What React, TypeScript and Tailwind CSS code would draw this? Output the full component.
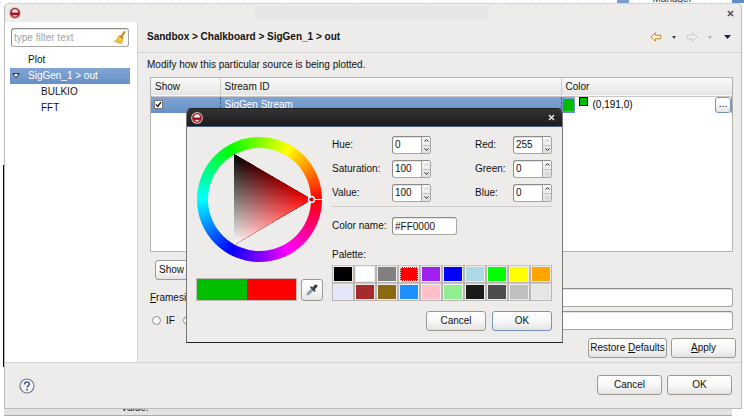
import React from "react";

const control =
  "rounded-[3px] border border-[#8e8b87] border-r-[#a9a6a2] border-b-[#a9a6a2] bg-white shadow-[inset_0_1px_0_#e4e4e4] outline-none";

const buttonBase =
  "flex items-center justify-center rounded-[3px] border bg-linear-to-b from-white via-[#f8f8f8] to-[#e4e3e2] leading-none";

function Button({
  children,
  className = "",
  primary = false,
}: {
  children: React.ReactNode;
  className?: string;
  primary?: boolean;
}) {
  return (
    <button
      type="button"
      className={`${buttonBase} h-5 ${primary ? "border-[#7a93bb]" : "border-[#9c9995]"} ${className}`}
    >
      {children}
    </button>
  );
}

function AppIcon() {
  return (
    <svg viewBox="0 0 12 12" className="size-3 shrink-0" aria-hidden="true">
      <circle cx="6" cy="6" r="5.9" fill="#c4c2c1" />
      <circle cx="6" cy="6" r="4.9" fill="#b5202c" />
      <path d="M3 5.8C3 3.2 4.2 2.2 6 2.2s3 1 3 3.6z" fill="#f6eeee" />
      <path d="M2 5.8h8v1.1H2z" fill="#7d0f18" />
      <path d="M3.6 8.2h4.8l-.9 1.2h-3z" fill="#f0dede" />
    </svg>
  );
}

function CloseIcon({ className }: { className: string }) {
  return (
    <svg viewBox="0 0 7 7" className={`size-[7px] ${className}`} aria-hidden="true">
      <path d="M1 1l5 5M6 1L1 6" stroke="currentColor" strokeWidth="1.7" fill="none" />
    </svg>
  );
}

function Broom() {
  return (
    <svg viewBox="0 0 12 13" className="h-[13px] w-3" aria-hidden="true">
      <path d="M10.4 1.2L8 4.8" stroke="#c98a14" strokeWidth="2.2" strokeLinecap="round" />
      <path d="M5.8 4.2l3.6 2.4-.7 1.2-3.9-2.4z" fill="#d0602b" />
      <path d="M4.6 5.2l4.2 2.8c.2 2-.4 3.4-1.4 4.6L.4 10.4c1.8-1.2 3.2-3 4.2-5.2z" fill="#f6d53c" stroke="#b98a12" strokeWidth=".6" />
      <path d="M3 10.6l2.2-2.8M5.2 11.4l1.6-2.6" stroke="#b98a12" strokeWidth=".6" />
    </svg>
  );
}

function Arrow({ back = false }: { back?: boolean }) {
  return (
    <svg viewBox="0 0 12 10" className="h-2.5 w-3" aria-hidden="true">
      <path
        d={back ? "M5.4.8L.9 5l4.5 4.2V6.8h5.4V3.2H5.4z" : "M6.6.8L11.1 5 6.6 9.2V6.8H1.2V3.2h5.4z"}
        fill={back ? "#fdf3c8" : "#f1f0ef"}
        stroke={back ? "#c48a26" : "#c9c8c6"}
        strokeLinejoin="round"
      />
    </svg>
  );
}

function Caret({ className }: { className: string }) {
  return (
    <svg viewBox="0 0 6 4" preserveAspectRatio="none" className={className} aria-hidden="true">
      <path d="M0 0h6L3 4z" fill="currentColor" />
    </svg>
  );
}

function NavBar() {
  return (
    <div className="flex items-center">
      <button type="button" aria-label="Back"><Arrow back /></button>
      <button type="button" aria-label="Back history" className="ml-2.5">
        <Caret className="h-[3px] w-1 text-[#444]" />
      </button>
      <button type="button" aria-label="Forward" className="ml-2.5"><Arrow /></button>
      <button type="button" aria-label="Forward history" className="ml-2.5">
        <Caret className="h-[3px] w-1 text-[#b5b4b2]" />
      </button>
      <button type="button" aria-label="View menu" className="ml-3">
        <Caret className="h-1 w-[7px] text-[#2b1a4d]" />
      </button>
    </div>
  );
}

function Sidebar() {
  return (
    <nav className="flex w-[133px] shrink-0 flex-col border-r border-[#d4d3d1] bg-white pt-1.5 pr-[7px] pl-[5px]">
      <div className={`mx-px flex h-[19px] items-center pr-0.5 pl-0.5 ${control}`}>
        <input
          aria-label="Filter"
          placeholder="type filter text"
          className="min-w-0 flex-1 outline-none placeholder:text-[#a3a3a3]"
        />
        <Broom />
      </div>
      <ul className="mt-[5px] leading-4">
        <li className="pl-[18px]">Plot</li>
        <li className="flex items-center bg-linear-to-b from-[#82a6d4] to-[#6690c6] text-white">
          <svg viewBox="0 0 8 6" className="mr-2 ml-0.5 h-1.5 w-2" aria-hidden="true">
            <path d="M.8.7h6.4L4 4.9z" fill="#fff" stroke="#222" />
          </svg>
          SigGen_1 &gt; out
        </li>
        <li className="pl-[31px]">BULKIO</li>
        <li className="pl-[31px]">FFT</li>
      </ul>
    </nav>
  );
}

function StreamTable() {
  return (
    <div className="mr-2 ml-3 flex-1 border border-[#b5b3b0] bg-white">
      <table className="w-full table-fixed border-collapse text-left">
        <thead>
          <tr className="h-[18px] border-b border-[#c9c7c5] bg-linear-to-b from-[#fafafa] to-[#e6e5e4]">
            <th className="w-[69px] border-r border-[#cfcdca] pl-1 font-normal">Show</th>
            <th className="border-r border-[#cfcdca] pl-1 font-normal">Stream ID</th>
            <th className="w-[171px] pl-1 font-normal">Color</th>
          </tr>
        </thead>
        <tbody>
          <tr className="h-4 bg-linear-to-b from-[#82a6d4] to-[#6690c6] text-white">
            <td className="border-r border-dashed border-[#3c5f91] p-0 pl-[3px]">
              <div className="grid size-[9px] place-items-center">
                <input
                  type="checkbox"
                  defaultChecked
                  aria-label="Show SigGen Stream"
                  className="peer col-start-1 row-start-1 size-[9px] appearance-none border border-[#777] bg-white"
                />
                <svg
                  viewBox="0 0 7 7"
                  className="pointer-events-none invisible col-start-1 row-start-1 size-[7px] peer-checked:visible"
                  aria-hidden="true"
                >
                  <path d="M1 3.4l1.8 2L6 1.2" fill="none" stroke="#111" strokeWidth="1.4" />
                </svg>
              </div>
            </td>
            <td className="border-r border-dashed border-[#3c5f91] p-0 pl-1">SigGen Stream</td>
            <td className="p-0">
              <div className="flex h-4 items-center text-black">
                <span className="ml-px h-3 w-[11px] bg-[#00bf00]" />
                <div className="ml-px flex h-full flex-1 items-center bg-white pl-1">
                  <span className="mb-1.5 size-[9px] border border-black bg-[#00bf00]" />
                  <span className="ml-[5px] flex-1">(0,191,0)</span>
                  <button
                    type="button"
                    aria-label="Choose color"
                    className={`${buttonBase} h-4 w-4 border-[#7a93bb] pb-0.5`}
                  >
                    ...
                  </button>
                </div>
                <span className="w-px" />
              </div>
            </td>
          </tr>
        </tbody>
      </table>
    </div>
  );
}

const radio =
  "size-[9px] appearance-none rounded-full border border-[#8e8b87] bg-white checked:bg-[radial-gradient(#222_35%,white_40%)]";

function PlotSettings() {
  return (
    <main className="flex min-w-0 flex-1 flex-col">
      <header className="flex h-[31px] items-center justify-between border-b border-[#d4d3d1] pr-2.5 pl-[9px]">
        <h1 className="font-bold">Sandbox &gt; Chalkboard &gt; SigGen_1 &gt; out</h1>
        <NavBar />
      </header>
      <p className="flex h-6 items-center pl-[9px]">Modify how this particular source is being plotted.</p>
      <StreamTable />
      <div className="mt-2 pl-[17px]">
        <Button className="px-[3px]">Show Advanced...</Button>
      </div>
      <div className="mt-2 mr-2 ml-3 flex items-center gap-2">
        <label htmlFor="framesize"><u>F</u>ramesize:</label>
        <input id="framesize" className={`h-[19px] min-w-0 flex-1 ${control}`} />
      </div>
      <div className="mt-1 mr-2 ml-3 flex items-center">
        <label className="ml-0.5 flex items-center gap-[5px]">
          <input type="radio" name="mode" className={radio} />IF
        </label>
        <label className="ml-2 flex items-center gap-[5px]">
          <input type="radio" name="mode" defaultChecked className={radio} />RF
        </label>
        <input aria-label="Frequency" className={`ml-2 h-[19px] min-w-0 flex-1 ${control}`} />
      </div>
      <div className="mt-2 mr-[5px] mb-1 flex justify-end gap-1">
        <Button className="w-[79px]"><span>Restore <u>D</u>efaults</span></Button>
        <Button className="w-[65px]"><span><u>A</u>pply</span></Button>
      </div>
    </main>
  );
}

function Spinner({
  id,
  label,
  value,
  canUp = false,
  canDown = false,
  labelClass,
}: {
  id: string;
  label: string;
  value: number;
  canUp?: boolean;
  canDown?: boolean;
  labelClass: string;
}) {
  return (
    <div className="flex h-[18px] items-center">
      <label htmlFor={id} className={labelClass}>{label}:</label>
      <div className={`flex h-[18px] w-[39px] overflow-hidden ${control}`}>
        <input id={id} defaultValue={value} className="w-7 min-w-0 pl-0.5 outline-none" />
        <div className="flex flex-1 flex-col border-l border-[#a9a6a2] bg-linear-to-b from-[#fafafa] to-[#e0dfde]">
          <button type="button" aria-label={`Increase ${label}`} className="flex flex-1 items-center justify-center">
            <svg viewBox="0 0 5 3" className="h-[3px] w-[5px]">
              <path d="M.5 2.6l2-2 2 2" fill="none" stroke={canUp ? "#222" : "#bbb"} />
            </svg>
          </button>
          <button type="button" aria-label={`Decrease ${label}`} className="flex flex-1 items-center justify-center border-t border-[#c4c2bf]">
            <svg viewBox="0 0 5 3" className="h-[3px] w-[5px]">
              <path d="M.5.4l2 2 2-2" fill="none" stroke={canDown ? "#222" : "#bbb"} />
            </svg>
          </button>
        </div>
      </div>
    </div>
  );
}

function ColorWheel() {
  return (
    <div className="mx-auto grid size-[125px] place-items-center rounded-full bg-[conic-gradient(from_90deg,#f00,#f0f,#00f,#0ff,#0f0,#ff0,#f00)]">
      <div className="col-start-1 row-start-1 size-[103px] rounded-full bg-[#edeceb]" />
      <svg viewBox="0 0 125 125" className="isolate col-start-1 row-start-1 size-[125px]" role="img" aria-label="Color wheel">
        <defs>
          <linearGradient id="towardHue" gradientUnits="userSpaceOnUse" x1="37" y1="0" x2="114" y2="0">
            <stop offset="0" stopColor="#000" />
            <stop offset="1" stopColor="#f00" />
          </linearGradient>
          <linearGradient id="towardWhite" gradientUnits="userSpaceOnUse" x1="76" y1="40" x2="37" y2="108">
            <stop offset="0" stopColor="#000" />
            <stop offset="1" stopColor="#fff" />
          </linearGradient>
        </defs>
        <path d="M37 17L115 62.5 37 108z" fill="url(#towardHue)" />
        <path d="M37 17L115 62.5 37 108z" fill="url(#towardWhite)" className="mix-blend-plus-lighter" />
        <path d="M117 62.5h8" stroke="#fff" />
        <circle cx="114.5" cy="62.5" r="3" fill="none" stroke="#fff" strokeWidth="1.4" />
      </svg>
    </div>
  );
}

function Eyedropper() {
  return (
    <svg viewBox="0 0 12 12" className="size-3" aria-hidden="true">
      <path d="M1 11l.8-2.6 4.4-4.4 1.8 1.8-4.4 4.4z" fill="#8fb0cc" stroke="#6f8496" strokeWidth=".7" />
      <path d="M5 3.2l3.8 3.8" stroke="#333" strokeWidth="1.6" strokeLinecap="round" />
      <path d="M7.4 4.6l2.4-2.4" stroke="#3a3f40" strokeWidth="3.2" strokeLinecap="round" />
    </svg>
  );
}

const palette: [string, string][] = [
  ["Black", "bg-black"],
  ["White", "bg-white"],
  ["Gray", "bg-[#808080]"],
  ["Red", "bg-[#ff0000]"],
  ["Purple", "bg-[#a020f0]"],
  ["Blue", "bg-[#0000ff]"],
  ["Light blue", "bg-[#add8e6]"],
  ["Green", "bg-[#00ff00]"],
  ["Yellow", "bg-[#ffff00]"],
  ["Orange", "bg-[#ffa500]"],
  ["Lavender", "bg-[#e6e6fa]"],
  ["Brown", "bg-[#a52a2a]"],
  ["Goldenrod", "bg-[#8b6914]"],
  ["Dodger blue", "bg-[#1e90ff]"],
  ["Pink", "bg-[#ffc0cb]"],
  ["Light green", "bg-[#90ee90]"],
  ["Gray 10", "bg-[#1a1a1a]"],
  ["Gray 30", "bg-[#4d4d4d]"],
  ["Gray 75", "bg-[#bfbfbf]"],
  ["Gray 90", "bg-[#e5e5e5]"],
];

function ColorDialog() {
  return (
    <section
      role="dialog"
      aria-label="Pick a color"
      className="absolute top-[108px] left-[186px] w-[377px] rounded-t-[5px] border border-[#222] border-x-[#777] bg-[#edeceb]"
    >
      <div className="flex h-[18px] items-center justify-between rounded-t-[4px] border-b border-[#4a6182] bg-linear-to-b from-[#333] to-[#1c1c1c] pr-[7px] pl-1">
        <AppIcon />
        <button type="button" aria-label="Close dialog"><CloseIcon className="text-[#ddd]" /></button>
      </div>
      <div className="flex justify-between pt-[9px] pr-2.5 pb-[11px] pl-[9px]">
        <div className="w-[127px] pt-px">
          <ColorWheel />
          <div className="mt-4 flex items-center justify-between">
            <div className="flex h-[23px] w-[101px] border border-[#bdbab7]">
              <span className="flex-1 bg-[#00bf00]" />
              <span className="flex-1 bg-[#ff0000]" />
            </div>
            <button type="button" aria-label="Pick from screen" className={`${buttonBase} size-[22px] border-[#9c9995]`}>
              <Eyedropper />
            </button>
          </div>
        </div>
        <div className="w-[220px]">
          <div className="flex justify-between">
            <div className="flex flex-col gap-1.5">
              <Spinner id="hue" label="Hue" value={0} canUp canDown labelClass="w-[60px]" />
              <Spinner id="saturation" label="Saturation" value={100} canDown labelClass="w-[60px]" />
              <Spinner id="value" label="Value" value={100} canDown labelClass="w-[60px]" />
            </div>
            <div className="flex flex-col gap-1.5">
              <Spinner id="red" label="Red" value={255} canDown labelClass="w-[38px]" />
              <Spinner id="green" label="Green" value={0} canUp labelClass="w-[38px]" />
              <Spinner id="blue" label="Blue" value={0} canUp labelClass="w-[38px]" />
            </div>
          </div>
          <hr className="mt-1 border-[#cfcdca]" />
          <div className="mt-2.5 flex items-center">
            <label htmlFor="colorName" className="w-[60px]">Color name:</label>
            <input id="colorName" defaultValue="#FF0000" className={`h-[18px] w-[65px] pl-0.5 ${control}`} />
          </div>
          <h2 className="mt-3 leading-4">Palette:</h2>
          <div className="mt-0.5 grid grid-cols-10">
            {palette.map(([name, color]) => (
              <button
                key={name}
                type="button"
                aria-label={name}
                className="flex h-[18px] border border-[#b9b6b3] border-t-[#c9c7c5] p-px"
              >
                <span
                  className={`size-full ${color} ${name === "Red" ? "outline-1 -outline-offset-1 outline-white/80 outline-dotted" : ""}`}
                />
              </button>
            ))}
          </div>
          <div className="mt-2.5 flex justify-end gap-1.5">
            <Button className="w-[60px]">Cancel</Button>
            <Button className="w-[60px]" primary>OK</Button>
          </div>
        </div>
      </div>
    </section>
  );
}

export default function App() {
  return (
    <div className="relative flex min-h-screen flex-col overflow-hidden bg-white font-['Liberation_Sans',Arial,sans-serif] text-[10px] leading-3 text-[#111]">
      <div
        className="flex h-[3px] items-start justify-end overflow-hidden bg-[repeating-linear-gradient(90deg,#cbd9ea_0_1px,transparent_1px_9px)] bg-[length:100%_1px] bg-bottom bg-no-repeat"
        aria-hidden="true"
      >
        <span className="mr-6 h-[3px] w-3 bg-[#7d9fd0]" />
        <span className="-mt-[7px] mr-10 text-[#333]">Manager</span>
        <span className="h-[3px] w-3 bg-[#5f8cc8]" />
      </div>
      <div className="flex flex-1">
        <div className="w-1 shrink-0 pt-[162px] pb-[42px] pl-[3px]"><div className="h-full bg-black" /></div>
        <div className="flex min-w-0 flex-1 flex-col rounded-t-[5px] border border-[#bdbcba] border-t-[#d5d4d3] bg-[#edeceb]">
          <div className="flex h-[18px] items-center justify-between pr-[7px] pl-1">
            <AppIcon />
            <span className="mr-1.5 h-3.5 w-[233px] bg-[#e6e6e6]" />
            <button type="button" aria-label="Close"><CloseIcon className="text-[#555]" /></button>
          </div>
          <div className="flex flex-1">
            <Sidebar />
            <PlotSettings />
          </div>
          <footer className="flex h-[46px] items-center justify-between border-t border-[#d4d3d1] pr-[9px] pl-3.5">
            <button type="button" aria-label="Help">
              <svg viewBox="0 0 16 16" className="size-4" aria-hidden="true">
                <circle cx="8" cy="8" r="7" fill="#f4f5f8" stroke="#6b7896" strokeWidth="1.2" />
                <path d="M5.6 6.4C5.6 4.8 6.6 4 8 4s2.4.8 2.4 2.1C10.4 7.6 8.1 7.8 8.1 9.6" fill="none" stroke="#4c5d86" strokeWidth="1.6" />
                <path d="M7.2 10.8h1.7v1.6H7.2z" fill="#4c5d86" />
              </svg>
            </button>
            <div className="mb-0.5 flex gap-[5px]">
              <Button className="w-[65px]">Cancel</Button>
              <Button className="w-[65px]">OK</Button>
            </div>
          </footer>
        </div>
        <div className="w-0.5 shrink-0" />
      </div>
      <div className="mr-3 ml-1 flex h-[7px] items-end overflow-hidden border-b border-[#aaa] bg-[#e4e3e2] pl-[117px] text-[#222]" aria-hidden="true">
        <span className="mb-px">Value:</span>
      </div>
      <div className="h-px" />
      <ColorDialog />
    </div>
  );
}
